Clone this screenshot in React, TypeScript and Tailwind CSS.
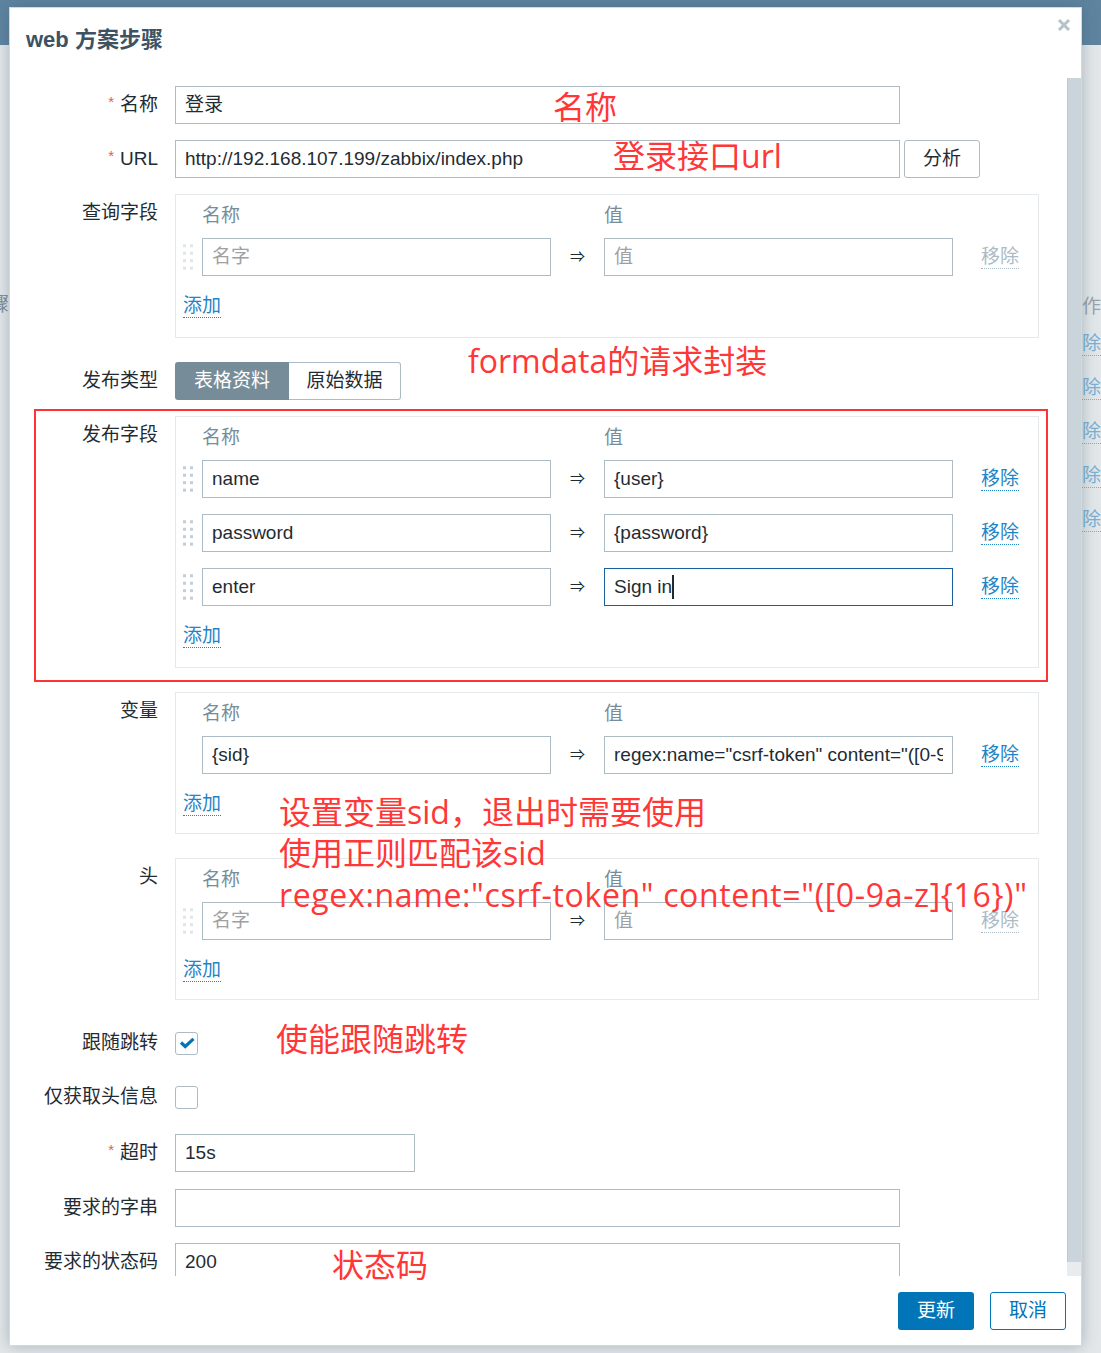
import React from 'react';

type Pair = { name?: string; value?: string; focus?: boolean };

const Label = ({ children, req }: { children: React.ReactNode; req?: boolean }) => (
  <div className="w-[148px] h-[38px] shrink-0 flex items-center justify-end text-[19px] text-[#1f2c33] whitespace-nowrap">
    {req && <span className="text-[#e45959] text-[15px] mr-[6px] -mt-[6px]">*</span>}
    {children}
  </div>
);

const Row = ({ label, req, children, className = '' }: { label: string; req?: boolean; children: React.ReactNode; className?: string }) => (
  <div className={`flex items-start gap-[17px] ${className}`}>
    <Label req={req}>{label}</Label>
    {children}
  </div>
);

const Field = ({ w, value, placeholder, focus, caret }: { w: string; value?: string; placeholder?: string; focus?: boolean; caret?: boolean }) => (
  <div className={`h-[38px] shrink-0 border bg-white flex items-center px-[9px] text-[19px] ${focus ? 'border-[#1b5f9c]' : 'border-[#acbbc4]'} ${w}`}>
    <div className="flex-1 flex items-center overflow-hidden whitespace-nowrap">
      {value ? <span className="text-[#1f2c33]">{value}</span> : <span className="text-[#a0a0a0]">{placeholder}</span>}
      {caret && <span className="w-[2px] h-[24px] bg-[#1f2c33] shrink-0" />}
    </div>
  </div>
);

const Link = ({ children, disabled, className = '' }: { children: React.ReactNode; disabled?: boolean; className?: string }) => (
  <span
    className={`inline-block text-[19px] leading-[22px] border-b border-dotted ${
      disabled ? 'text-[#acbbc4] border-[#acbbc4]' : 'text-[#1f85c6] border-[#1f85c6]'
    } ${className}`}
  >
    {children}
  </span>
);

const Grip = ({ light }: { light?: boolean }) => (
  <svg width="11" height="28" viewBox="0 0 11 28" className="block">
    {[0, 8.2, 16.4, 24.6].map((y) => (
      <g key={y} fill={light ? '#dfe5e9' : '#c3ced5'}>
        <rect x="0" y={y} width="3.3" height="3.3" />
        <rect x="7.7" y={y} width="3.3" height="3.3" />
      </g>
    ))}
  </svg>
);

const PairTable = ({ rows, handle, disabled, className = 'pb-[17px] mb-[8px]' }: { rows: Pair[]; handle?: boolean; disabled?: boolean; className?: string }) => (
  <div className={`w-[864px] border border-[#e6e9eb] pl-[7px] pt-[5px] ${className}`}>
    <div className="h-[32px] flex items-center text-[19px] text-[#768d99]">
      <div className="w-[10px] mr-[9px]" />
      <div className="w-[349px]">名称</div>
      <div className="w-[53px]" />
      <div>值</div>
    </div>
    <div className="mt-[6px] flex flex-col gap-[16px]">
      {rows.map((r, i) => (
        <div key={i} className="flex items-center h-[38px]">
          <div className="w-[10px] mr-[9px] flex items-center">{handle && <Grip light={disabled} />}</div>
          <Field w="w-[349px]" value={r.name} placeholder="名字" />
          <div className="w-[53px] text-center text-[15px] text-[#1f2c33]">⇒</div>
          <Field w="w-[349px]" value={r.value} placeholder="值" focus={r.focus} caret={r.focus} />
          <Link disabled={disabled} className="ml-[28px]">
            移除
          </Link>
        </div>
      ))}
    </div>
    <div className="mt-[16px] h-[28px] flex items-center">
      <Link>添加</Link>
    </div>
  </div>
);

const Check = ({ on }: { on?: boolean }) => (
  <div className="h-[38px] flex items-center">
    <div className="w-[23px] h-[23px] border border-[#acbbc4] rounded-[3px] bg-white flex items-center justify-center">
      {on && (
        <svg width="16" height="12" viewBox="0 0 16 12">
          <path d="M2 5.5 L6.2 9.5 L14.5 1.8" stroke="#0275b8" strokeWidth="3.2" fill="none" />
        </svg>
      )}
    </div>
  </div>
);

const Note = ({ children, className }: { children: React.ReactNode; className: string }) => (
  <div className={`absolute text-[32px] leading-[40px] text-[#ff3737] whitespace-nowrap font-['Open_Sans','Noto_Sans_CJK_SC',sans-serif] ${className}`}>
    {children}
  </div>
);

export default function App() {
  return (
    <div className="relative w-[1101px] h-[1353px] overflow-hidden bg-[#e3e7ea] font-['Liberation_Sans','Noto_Sans_CJK_SC',sans-serif]">
      {/* page behind the dialog */}
      <div className="h-[45px] bg-[#5e84a0]" />
      <div className="flex justify-between">
        <div className="pt-[245px] -ml-[10px] h-[30px] text-[19px] leading-[30px] text-[#7c8c97]">骤</div>
        <div className="pt-[247px] flex flex-col items-end text-[19px]">
          <div className="h-[30px] leading-[30px] text-[#97a3ab]">动作</div>
          {[0, 1, 2, 3, 4].map((i) => (
            <div key={i} className="h-[44px] flex items-center">
              <span className="leading-[22px] text-[#79b0d6] border-b border-dotted border-[#79b0d6]">移除</span>
            </div>
          ))}
        </div>
      </div>

      {/* dialog */}
      <div className="absolute left-[9px] top-[7px] w-[1073px] h-[1339px] bg-white border border-[#d3dadf] shadow-[0_0_14px_rgba(60,80,95,0.35)] flex flex-col">
        <div className="h-[70px] shrink-0 flex items-start justify-between">
          <div className="ml-[16px] mt-[19px] text-[22px] leading-[26px] font-bold text-[#3d5263]">web 方案步骤</div>
          <svg width="14" height="14" viewBox="0 0 14 14" className="mt-[10px] mr-[10px]">
            <path d="M2 2 L12 12 M12 2 L2 12" stroke="#b6c2c9" strokeWidth="3" />
          </svg>
        </div>

        <div className="h-[1198px] shrink-0 flex">
          <div className="flex-1 overflow-hidden pt-[8px]">
            <div className="flex flex-col gap-[16px]">
              <Row label="名称" req>
                <Field w="w-[725px]" value="登录" />
              </Row>
              <Row label="URL" req>
                <div className="flex gap-[4px]">
                  <Field w="w-[725px]" value="http://192.168.107.199/zabbix/index.php" />
                  <button className="w-[76px] h-[38px] border border-[#acbbc4] rounded-[3px] bg-white text-[19px] text-[#1f2c33]">分析</button>
                </div>
              </Row>
              <Row label="查询字段">
                <PairTable rows={[{}]} handle disabled />
              </Row>
              <Row label="发布类型">
                <div className="flex h-[38px] text-[19px]">
                  <div className="w-[114px] bg-[#768d99] text-white rounded-l-[3px] flex items-center justify-center">表格资料</div>
                  <div className="w-[112px] border border-l-0 border-[#acbbc4] rounded-r-[3px] flex items-center justify-center text-[#1f2c33]">原始数据</div>
                </div>
              </Row>
              <Row label="发布字段">
                <PairTable
                  handle
                  rows={[
                    { name: 'name', value: '{user}' },
                    { name: 'password', value: '{password}' },
                    { name: 'enter', value: 'Sign in', focus: true },
                  ]}
                />
              </Row>
              <Row label="变量">
                <PairTable
                  rows={[{ name: '{sid}', value: 'regex:name="csrf-token" content="([0-9a-z]{16})"' }]}
                  className="pb-[15px] mb-[8px]"
                />
              </Row>
              <Row label="头">
                <PairTable rows={[{}]} handle disabled className="pb-[15px] mb-[8px]" />
              </Row>
              <Row label="跟随跳转">
                <Check on />
              </Row>
              <Row label="仅获取头信息" className="mb-[2px]">
                <Check />
              </Row>
              <Row label="超时" req className="mb-[1px]">
                <Field w="w-[240px]" value="15s" />
              </Row>
              <Row label="要求的字串">
                <Field w="w-[725px]" />
              </Row>
              <Row label="要求的状态码">
                <Field w="w-[725px]" value="200" />
              </Row>
            </div>
          </div>
          <div className="w-[14px] shrink-0 flex flex-col">
            <div className="flex-1 bg-[#c9d4db] border-l border-[#bdc9d0]" />
            <div className="h-[14px] bg-[#e9ecee]" />
          </div>
        </div>

        <div className="h-[70px] shrink-0 flex items-center justify-end gap-[16px] pr-[15px]">
          <button className="w-[76px] h-[38px] rounded-[3px] bg-[#0275b8] text-white text-[19px]">更新</button>
          <button className="w-[76px] h-[38px] rounded-[3px] border border-[#0275b8] bg-white text-[#0275b8] text-[19px]">取消</button>
        </div>
      </div>

      {/* red annotations drawn over the screenshot */}
      <div className="absolute left-[34px] top-[409px] w-[1014px] h-[273px] border-2 border-[#ff3333]" />
      <Note className="left-[553px] top-[87px]">名称</Note>
      <Note className="left-[613px] top-[136px]">登录接口url</Note>
      <Note className="left-[468px] top-[341px]">formdata的请求封装</Note>
      <Note className="left-[279px] top-[792px]">设置变量sid，退出时需要使用</Note>
      <Note className="left-[279px] top-[833px]">使用正则匹配该sid</Note>
      <Note className="left-[279px] top-[875px] tracking-[0.65px]">{'regex:name:"csrf-token" content="([0-9a-z]{16})"'}</Note>
      <Note className="left-[276px] top-[1019px]">使能跟随跳转</Note>
      <Note className="left-[332px] top-[1245px]">状态码</Note>
    </div>
  );
}
